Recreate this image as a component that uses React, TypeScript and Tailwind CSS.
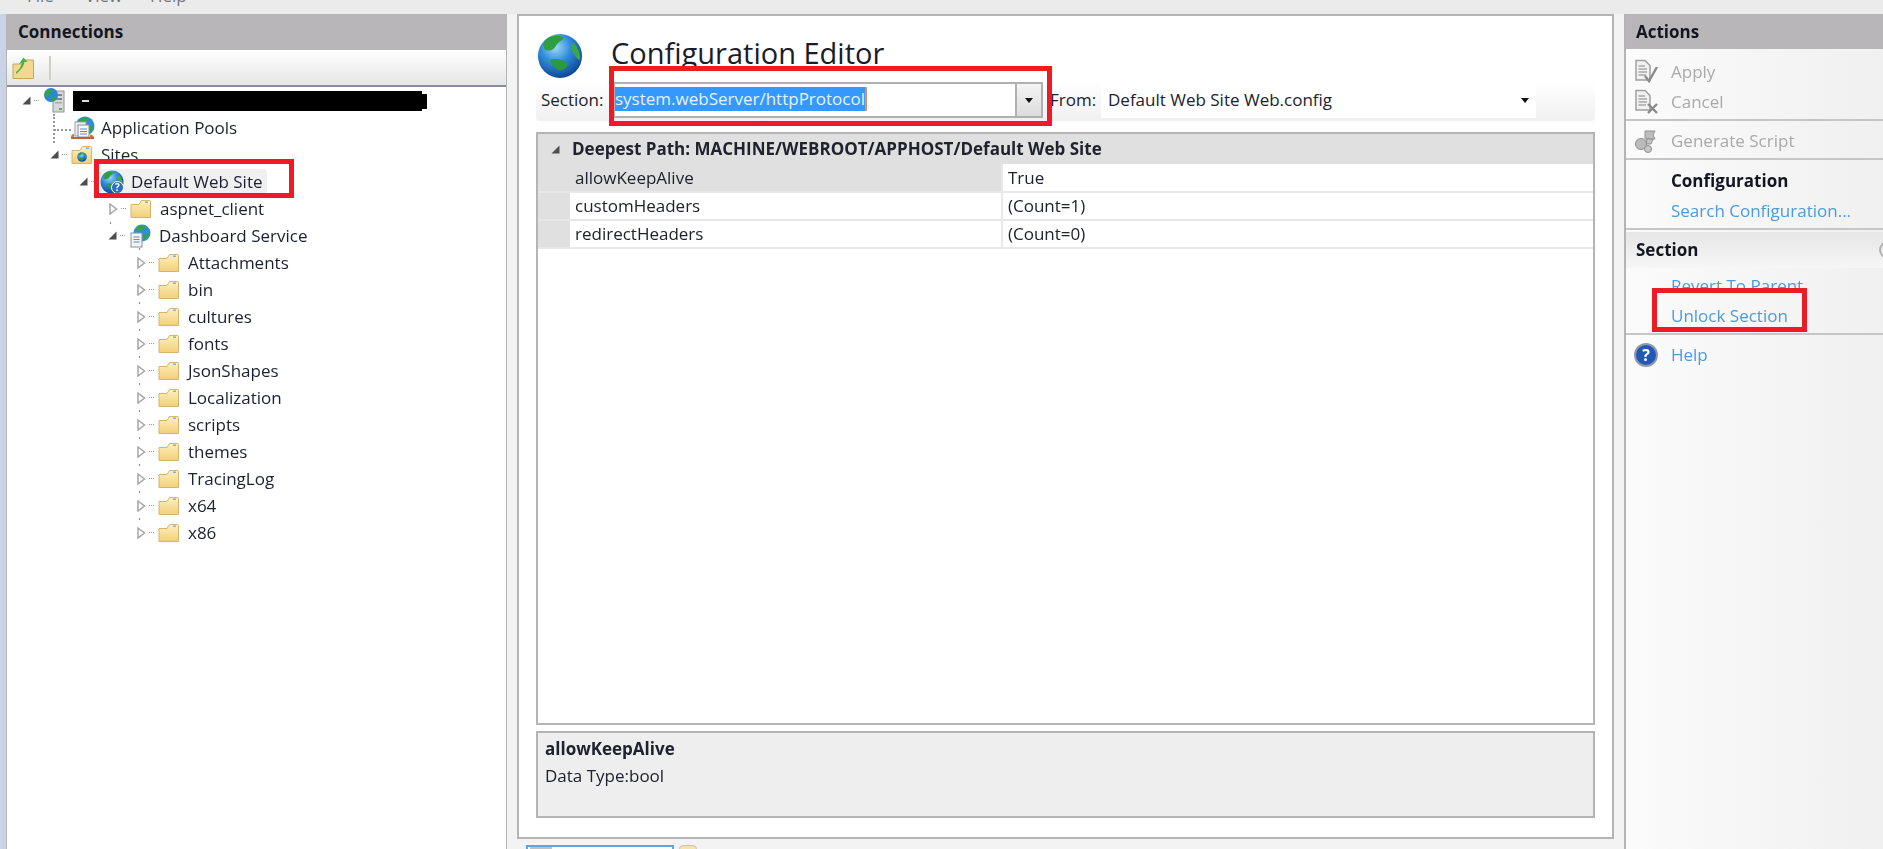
import type { ReactNode } from "react";

function Globe({ size = 24 }: { size?: number }) {
  return (
    <svg width={size} height={size} viewBox="0 0 24 24">
      <defs>
        <radialGradient id="sea" cx="40%" cy="30%" r="75%">
          <stop offset="0%" stopColor="#9fd8f5" />
          <stop offset="45%" stopColor="#2f8ddc" />
          <stop offset="100%" stopColor="#0c3f8f" />
        </radialGradient>
      </defs>
      <circle cx="12" cy="12" r="11.5" fill="url(#sea)" />
      <path d="M6 2.5c3-1.5 6-1.5 8 0-1 2-3 2-4 4s-3 3-5 2.5S2 5 6 2.5z" fill="#2f9e3f" />
      <path d="M19 5c2 2 4 6 3.5 9-1.5 0-2.500-2-3.500-3.500S17 7 19 5z" fill="#3aa845" />
      <path d="M7 14c3-1 7 0 9 2 0 2-2 3-4 3.500-2 0-5-3.500-5-5.500z" fill="#2a9a3c" />
    </svg>
  );
}

function Folder() {
  return (
    <svg width="22" height="21" viewBox="0 0 22 21">
      <defs>
        <linearGradient id="fold" x1="0" y1="0" x2="0" y2="1">
          <stop offset="0%" stopColor="#fdf0bf" />
          <stop offset="100%" stopColor="#f3cf78" />
        </linearGradient>
      </defs>
      <path
        d="M1 6.500H9L11.500 2.500H19.500Q20.500 2.500 20.500 3.500V19.500H1Z"
        fill="url(#fold)"
        stroke="#d2b56e"
      />
      <rect x="15" y="3.500" width="3" height="1.500" fill="#7fb0dc" />
    </svg>
  );
}

function SitesIcon() {
  return (
    <span className="relative block h-[21px] w-[22px]">
      <Folder />
      <span className="absolute left-[6px] top-[8px]">
        <Globe size={10} />
      </span>
    </span>
  );
}

function ServerIcon() {
  return (
    <svg width="23" height="25" viewBox="0 0 23 25">
      <rect x="10" y="3" width="11" height="21" fill="#d6d8da" stroke="#8f9498" />
      <rect x="12" y="6" width="7" height="2" fill="#80868c" />
      <rect x="12" y="10" width="7" height="2" fill="#80868c" />
      <rect x="12" y="14" width="7" height="1.500" fill="#a5abaf" />
      <rect x="16" y="20" width="3" height="2" fill="#5fb04e" />
      <circle cx="8" cy="7" r="7" fill="#2b86d6" />
      <path d="M4 2c3-1 5 0 6 1-1 2-4 1-4 4s-3 2-4 1 0-5 2-6z" fill="#33a343" />
      <path d="M9 9c2-1 4 0 4 1s-2 3-3 3-2-3-1-4z" fill="#33a343" />
    </svg>
  );
}

function PoolsIcon() {
  return (
    <svg width="25" height="24" viewBox="0 0 25 24">
      <circle cx="15" cy="10" r="9.500" fill="#2f8ddc" />
      <path d="M10 3c3-2 7-2 9 0-1 2-3 2-4 4s-3 2-5 1-1-4 0-5z" fill="#35a545" />
      <path d="M19 10c2-1 4 0 4 2s-2 4-3 4-2-5-1-6z" fill="#35a545" />
      <rect x="5" y="6" width="11" height="14" fill="#eef0f2" stroke="#9a9fa4" />
      <rect x="8" y="9" width="11" height="12" fill="#f7f8f9" stroke="#8b9096" />
      <path d="M10 13h7M10 15.500h7M10 18h7" stroke="#5e8fc4" strokeWidth="1" />
      <path d="M1 22c0-3 1-4 3-4v4.500H1zM20 18.500c2 0 4 1 4 4h-4z" fill="#c9793c" />
      <rect x="1" y="21" width="23" height="2" fill="#b8682e" />
    </svg>
  );
}

function ServiceIcon() {
  return (
    <svg width="22" height="24" viewBox="0 0 22 24">
      <circle cx="13" cy="9" r="8.500" fill="#2f8ddc" />
      <path d="M8 3c3-2 7-2 9 0-1 2-3 2-4 4s-3 2-5 0 0-3 0-4z" fill="#35a545" />
      <path d="M16 10c2-1 5-1 4 2s-3 4-4 3-1-4 0-5z" fill="#35a545" />
      <rect x="2" y="9" width="11" height="14" fill="#f1f3f5" stroke="#8b9096" />
      <path d="M4.500 13h6M4.500 15.500h6M4.500 18h6" stroke="#5e8fc4" strokeWidth="1" />
    </svg>
  );
}

function SiteIcon() {
  return (
    <span className="relative block h-[24px] w-[24px]">
      <Globe size={24} />
      <span className="absolute bottom-0 right-0 flex h-[13px] w-[13px] items-center justify-center rounded-full border border-white bg-[#2a6fc4] text-[10px] font-bold leading-none text-white">
        ?
      </span>
    </span>
  );
}

function ToolbarFolder() {
  return (
    <svg width="24" height="24" viewBox="0 0 24 24">
      <path d="M1 8H10L13 4H21.500V22.500H1Z" fill="#f2d98f" stroke="#c4a860" />
      <path d="M4 16C7 14 9 11 10 7L7 8L11.500 1.500L15.500 6L12.500 6C12 10 9 14 4 18Z" fill="#47b23f" />
    </svg>
  );
}

function Filled() {
  return (
    <svg width="9" height="9" viewBox="0 0 9 9" className="block">
      <polygon points="8.500,0.500 8.500,8.500 0.500,8.500" fill="#4d4d4d" />
    </svg>
  );
}

function Open() {
  return (
    <svg width="9" height="12" viewBox="0 0 9 12" className="block">
      <polygon points="1,1 7.500,6 1,11" fill="#fff" stroke="#a6a6a6" strokeWidth="1.500" />
    </svg>
  );
}

type RowProps = {
  indent: string;
  expander: "filled" | "open";
  icon: ReactNode;
  children: ReactNode;
  tick?: boolean;
};

function TreeRow({ indent, expander, icon, children, tick }: RowProps) {
  return (
    <div className={`relative flex h-[27px] items-center ${indent}`}>
      <span className="relative flex w-[21px] shrink-0 items-center">
        {tick && <span className="absolute -top-[9px] left-[2px] h-[2px] w-[1px] bg-[#888]" />}
        {expander === "filled" ? <Filled /> : <Open />}
        <span className="ml-[3px] w-[5px] border-t border-dotted border-[#999]" />
      </span>
      <span className="flex w-[30px] shrink-0 items-center">{icon}</span>
      {children}
    </div>
  );
}

const folders = [
  "Attachments",
  "bin",
  "cultures",
  "fonts",
  "JsonShapes",
  "Localization",
  "scripts",
  "themes",
  "TracingLog",
  "x64",
  "x86",
];

function Tree() {
  return (
    <div className="text-[17px] leading-none text-[#1d2030]">
      <TreeRow indent="pl-[15px]" expander="filled" icon={<ServerIcon />}>
        <span className="relative h-[20px] w-[349px] bg-black">
          <span className="absolute left-[9px] top-[9px] h-[2px] w-[7px] bg-[#ddd]" />
          <span className="absolute -right-[5px] top-[3px] h-[15px] w-[5px] bg-black" />
        </span>
      </TreeRow>
      <div className="relative flex h-[27px] items-center pl-[63px]">
        <span className="absolute left-[46px] top-0 h-[29px] border-l-2 border-dotted border-[#999]" />
        <span className="absolute left-[47px] top-[15px] w-[17px] border-t-2 border-dotted border-[#999]" />
        <span className="flex w-[31px] items-center">
          <PoolsIcon />
        </span>
        Application Pools
      </div>
      <TreeRow indent="pl-[43px]" expander="filled" icon={<SitesIcon />}>
        Sites
      </TreeRow>
      <TreeRow indent="pl-[72px]" expander="filled" icon={null}>
        <span className="-ml-[30px] flex h-[26px] w-[167px] items-center gap-[7px] rounded-sm bg-[#f0f0f0]">
          <SiteIcon />
          Default Web Site
        </span>
      </TreeRow>
      <TreeRow indent="pl-[102px]" expander="open" icon={<Folder />}>
        aspnet_client
      </TreeRow>
      <TreeRow indent="pl-[101px]" expander="filled" tick icon={<ServiceIcon />}>
        Dashboard Service
      </TreeRow>
      {folders.map((name) => (
        <TreeRow key={name} indent="pl-[130px]" expander="open" tick icon={<Folder />}>
          {name}
        </TreeRow>
      ))}
    </div>
  );
}

function Arrow() {
  return (
    <svg width="8" height="5" viewBox="0 0 8 5">
      <polygon points="0,0 8,0 4,5" fill="#111" />
    </svg>
  );
}

const grid = [
  { name: "allowKeepAlive", value: "True", h: "h-[29px]", bg: "bg-[#e0e0e0]" },
  { name: "customHeaders", value: "(Count=1)", h: "h-[28px]", bg: "bg-white" },
  { name: "redirectHeaders", value: "(Count=0)", h: "h-[28px]", bg: "bg-white" },
];

function Editor() {
  return (
    <div className="flex h-[825px] flex-col border-2 border-[#b4b4b4] bg-white pl-[17px] pr-[17px] text-[17px] text-[#20222e]">
      <div className="flex h-[66px] shrink-0 pl-px pt-[17px]">
        <Globe size={46} />
        <span className="ml-[28px] mt-[2px] text-[29px] leading-[36px] text-[#1a1c28]">
          Configuration Editor
        </span>
      </div>
      <div className="flex h-[39px] shrink-0 rounded-[4px] bg-gradient-to-b from-white to-[#f0f0f0]">
        <span className="ml-[5px] flex h-[36px] w-[72px] items-center">Section:</span>
        <div className="flex h-[36px] w-[430px] border-2 border-[#b0b0b0] bg-white">
          <span className="my-[3px] flex h-[24px] items-center border-r-2 border-[#e09050] bg-[#3399ff] text-[#e8f2ff]">
            system.webServer/httpProtocol
          </span>
          <span className="ml-auto flex w-[26px] items-center justify-center border-l-2 border-[#b0b0b0] bg-gradient-to-b from-[#f4f4f4] to-[#dcdcdc]">
            <Arrow />
          </span>
        </div>
        <span className="ml-[7px] flex h-[36px] w-[51px] items-center">From:</span>
        <div className="flex h-[36px] w-[435px] items-center justify-between bg-white pl-[7px] pr-[7px]">
          Default Web Site Web.config
          <Arrow />
        </div>
      </div>
      <div className="mt-[11px] flex h-[593px] shrink-0 flex-col border-2 border-[#b4b4b4] bg-white">
        <div className="flex h-[30px] shrink-0 items-center bg-[#e0e0e0] font-bold">
          <span className="ml-[13px] mr-[12px]">
            <Filled />
          </span>
          Deepest Path: MACHINE/WEBROOT/APPHOST/Default Web Site
        </div>
        {grid.map((row) => (
          <div key={row.name} className={`flex shrink-0 border-b-2 border-[#e8e8e8] ${row.h}`}>
            <span className="w-[32px] bg-[#e0e0e0]" />
            <span className={`flex w-[433px] items-center border-r-2 border-[#e8e8e8] pl-[5px] ${row.bg}`}>
              {row.name}
            </span>
            <span className="flex items-center pl-[5px]">{row.value}</span>
          </div>
        ))}
      </div>
      <div className="mt-[6px] flex h-[87px] shrink-0 flex-col border-2 border-[#b4b4b4] bg-[#eeeeee] pl-[7px]">
        <span className="mt-[2px] font-bold leading-[27px]">allowKeepAlive</span>
        <span className="leading-[27px]">Data Type:bool</span>
      </div>
    </div>
  );
}

function DocIcon({ mark }: { mark: "check" | "x" }) {
  return (
    <svg width="25" height="26" viewBox="0 0 25 26">
      <path d="M2 1.500H11L16 6.500V21H2Z" fill="#f2f2f2" stroke="#a0a0a0" strokeWidth="1.500" />
      <path d="M4.500 7H11M4.500 10H13M4.500 13H13M4.500 16H12" stroke="#a8a8a8" strokeWidth="1.300" />
      {mark === "check" ? (
        <path d="M11 17L15 22L23 8" fill="none" stroke="#8a8a8a" strokeWidth="2.400" />
      ) : (
        <path d="M14 15L23 24M23 15L14 24" fill="none" stroke="#8a8a8a" strokeWidth="2.400" />
      )}
    </svg>
  );
}

function ScriptIcon() {
  return (
    <svg width="24" height="25" viewBox="0 0 24 25">
      <path d="M11 2H21L19 6L21 10H11Z" fill="#bdbdbd" stroke="#8f8f8f" />
      <path d="M13 10H19L17 15H12Z" fill="#c4c4c4" stroke="#8f8f8f" />
      <circle cx="7" cy="15" r="5.500" fill="#bbb" stroke="#8f8f8f" />
      <circle cx="14" cy="20" r="3.500" fill="#c8c8c8" stroke="#8f8f8f" />
    </svg>
  );
}

function HelpIcon() {
  return (
    <span className="flex h-[24px] w-[24px] items-center justify-center rounded-full border-2 border-[#8f9aa6] bg-[#2458b8] text-[16px] font-bold leading-none text-white">
      ?
    </span>
  );
}

function Action({ icon, label, tone }: { icon?: ReactNode; label: string; tone: string }) {
  return (
    <div className={`flex h-[30px] items-center pl-[8px] ${tone}`}>
      <span className="flex w-[37px] shrink-0 items-center">{icon}</span>
      {label}
    </div>
  );
}

const rule = "my-[2px] h-[2px] bg-[#c6c6c6]";
const gray = "text-[#a9a9a9]";
const link = "text-[#4a9be0]";

function Actions() {
  return (
    <div className="flex-1 border-l-2 border-[#b4b4b4] bg-gradient-to-r from-[#fbfbfb] to-[#f0f0f0] text-[17px]">
      <div className="flex h-[35px] items-center bg-[#b8b6b9] pl-[10px] font-bold text-[#14161f]">Actions</div>
      <div className="pt-[8px]">
        <Action icon={<DocIcon mark="check" />} label="Apply" tone={gray} />
        <Action icon={<DocIcon mark="x" />} label="Cancel" tone={gray} />
        <div className={rule} />
        <div className="pt-[3px]">
          <Action icon={<ScriptIcon />} label="Generate Script" tone={gray} />
        </div>
        <div className={rule} />
        <div className="pt-[4px]">
          <Action label="Configuration" tone="font-bold text-[#14161f]" />
          <Action label="Search Configuration..." tone={link} />
        </div>
        <div className={rule} />
        <div className="relative mt-[2px] flex h-[36px] items-center overflow-hidden bg-gradient-to-b from-[#e6e6e6] to-[#f6f6f6] pl-[10px] font-bold text-[#14161f]">
          Section
          <span className="absolute -right-[14px] top-[9px] h-[18px] w-[18px] rounded-full border-2 border-[#b0b0b0]" />
        </div>
        <div className="pt-[3px]">
          <Action label="Revert To Parent" tone={link} />
          <Action label="Unlock Section" tone={link} />
        </div>
        <div className={rule} />
        <div className="pt-[3px]">
          <Action icon={<HelpIcon />} label="Help" tone={link} />
        </div>
      </div>
    </div>
  );
}

export default function App() {
  return (
    <div className="relative h-[849px] w-[1883px] overflow-hidden bg-[#f3f3f3] font-['Open_Sans',sans-serif]">
      <div className="flex h-full flex-col blur-[0.5px]">
        <div className="h-[14px] shrink-0 overflow-hidden bg-[#ebebeb]">
          <div className="-mt-[14px] flex text-[17px] leading-[20px] text-[#777]">
            <span className="ml-[27px] w-[58px]">File</span>
            <span className="w-[65px]">View</span>
            <span>Help</span>
          </div>
        </div>
        <div className="flex flex-1">
          <div className="w-[6px] shrink-0 bg-[#c9d5e6]" />
          <div className="w-[501px] shrink-0 border-x border-[#b4b4b4] bg-white">
            <div className="flex h-[36px] items-center bg-[#b8b6b9] pl-[11px] text-[17px] font-bold text-[#14161f]">
              Connections
            </div>
            <div className="flex h-[37px] items-center border-b-2 border-[#8a8c9c] bg-gradient-to-b from-white to-[#e6e6e6] pl-[5px]">
              <ToolbarFolder />
              <span className="ml-[13px] h-[24px] w-[2px] bg-[#cfcfc4]" />
            </div>
            <Tree />
          </div>
          <div className="ml-[10px] flex w-[1097px] shrink-0 flex-col">
            <Editor />
            <div className="mt-[6px] flex">
              <div className="ml-[9px] h-[20px] w-[148px] border-2 border-[#55a8ef] bg-white pl-[2px]">
                <span className="block h-[16px] w-[22px] bg-[#c0c0c0]" />
              </div>
              <span className="ml-[5px] h-[20px] w-[18px] rounded-sm border border-[#c4c4c4] bg-[#f7e3a6]" />
            </div>
          </div>
          <div className="ml-[10px] flex flex-1">
            <Actions />
          </div>
        </div>
      </div>
      <div className="absolute left-[94px] top-[159px] h-[39px] w-[200px] border-[5px] border-[#ed1c24]" />
      <div className="absolute left-[609px] top-[66px] h-[60px] w-[443px] border-[5px] border-[#ed1c24]" />
      <div className="absolute left-[1652px] top-[288px] h-[44px] w-[155px] border-[5px] border-[#ed1c24]" />
    </div>
  );
}
